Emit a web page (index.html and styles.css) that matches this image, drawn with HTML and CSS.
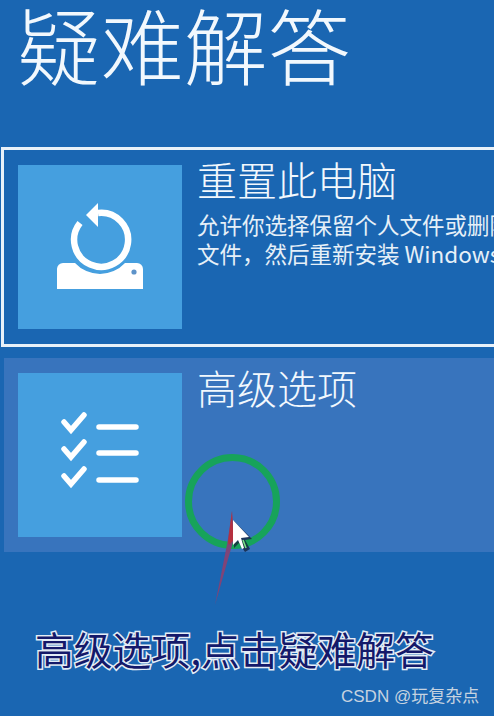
FILE: index.html
```html
<!DOCTYPE html>
<html lang="zh-CN">
<head>
<meta charset="utf-8">
<title>疑难解答</title>
<link rel="stylesheet" href="styles.css">
</head>
<body>
<main class="page">
  <h1 class="heading">疑难解答</h1>
  <section class="card card-focus">
    <div class="tile">
      <svg class="tile-icon" viewBox="0 0 164 164">
        <path class="solid" d="M39 124V104a6 6 0 0 1 6-6H57A34 34 0 0 0 107 98H119a6 6 0 0 1 6 6V124Z"/>
        <circle class="dot" cx="116" cy="107" r="2.6"/>
        <path class="ring" d="M62 58A27 27 0 1 0 80 48"/>
        <path class="solid" d="M68 50L80 38V62Z"/>
      </svg>
    </div>
    <div class="body">
      <h2 class="title">重置此电脑</h2>
      <p class="desc">允许你选择保留个人文件或删除个人<br>文件，然后重新安装 Windows。</p>
    </div>
  </section>
  <section class="card card-hover">
    <div class="tile">
      <svg class="tile-icon" viewBox="0 0 164 164">
        <path class="line" d="M46 49L53 57L66 42"/>
        <path class="line" d="M46 76L53 84L66 69"/>
        <path class="line" d="M46 103L53 111L66 96"/>
        <path class="line" d="M81 54H118"/>
        <path class="line" d="M81 80H118"/>
        <path class="line" d="M81 107H118"/>
      </svg>
    </div>
    <div class="body">
      <h2 class="title">高级选项</h2>
    </div>
  </section>
  <p class="caption">高级选项,点击疑难解答</p>
  <p class="mark">CSDN @玩复杂点</p>
  <svg class="marker" viewBox="0 0 494 716">
    <circle class="marker-ring" cx="232.5" cy="501.5" r="44"/>
    <path class="marker-arrow" d="M232 511L233.5 540L215 605L227.5 542Z"/>
    <path class="marker-arrow-top" d="M232 511L233.5 540L229 545L228 542Z"/>
    <path class="cursor-shadow" d="M234 521V548L239 543L245 552L250 549L245 540L252 539Z"/>
    <path class="cursor" d="M233 520V545L238 540L242 549L244 548L241 538L249 537Z"/>
    <path class="cursor-tail" d="M243 540L246 548"/>
  </svg>
</main>
</body>
</html>
```
FILE: styles.css
```css
* { box-sizing: border-box; }
html, body { margin: 0; padding: 0; }
body { background: #1a66b2; }
.page {
  position: relative;
  width: 494px;
  height: 716px;
  overflow: hidden;
  background: #1a66b2;
  color: #fff;
  font-family: "Noto Sans CJK SC", "Liberation Sans", sans-serif;
}
.heading {
  margin: 0 0 0 17px;
  height: 147px;
  padding-top: 0;
  font-size: 83.5px;
  line-height: 86px;
  font-weight: 300;
  white-space: nowrap;
  color: #f2f8fd;
}
.card {
  display: flex;
  gap: 15px;
  width: 540px;
}
.card-focus {
  margin-left: 1px;
  padding: 15px 14px;
  height: 200px;
  border: 3px solid #e8f1f9;
}
.card-hover {
  margin: 11px 0 0 4px;
  padding: 15px 14px;
  height: 194px;
  background: #3874bd;
}
.tile {
  flex: none;
  width: 164px;
  height: 164px;
  background: #459fdf;
}
.tile-icon { display: block; width: 164px; height: 164px; }
.solid { fill: #fff; }
.dot { fill: #5d93c9; }
.ring { fill: none; stroke: #fff; stroke-width: 6.5; }
.line { fill: none; stroke: #fff; stroke-width: 5.5; stroke-linecap: round; }
.body { min-width: 0; white-space: nowrap; margin-top: -9px; }
.title {
  margin: 0;
  font-size: 40px;
  line-height: 46px;
  font-weight: 300;
  color: #f2f8fd;
}
.desc {
  margin: 8px 0 0;
  font-size: 22.5px;
  line-height: 29px;
  color: #e6f0f8;
}
.caption {
  margin: 72px 0 0 35px;
  font-size: 38.8px;
  line-height: 48px;
  font-weight: 400;
  white-space: nowrap;
  color: #14196a;
  -webkit-text-stroke: 3px #e4edf6;
  paint-order: stroke fill;
}
.mark {
  position: absolute;
  left: 341px;
  top: 686px;
  margin: 0;
  font-family: "Liberation Sans", "Noto Sans CJK SC", sans-serif;
  font-size: 17px;
  line-height: 22px;
  white-space: nowrap;
  color: #c6d3e0;
}
.marker {
  position: absolute;
  left: 0;
  top: 0;
  width: 494px;
  height: 716px;
}
.marker-ring { fill: none; stroke: #17a35a; stroke-width: 7; }
.marker-arrow { fill: #7f4478; }
.marker-arrow-top { fill: #b5303f; }
.cursor-shadow { fill: #12203a; opacity: .75; }
.cursor { fill: #fff; }
.cursor-tail { stroke: #7fe08a; stroke-width: 1.5; }
```
